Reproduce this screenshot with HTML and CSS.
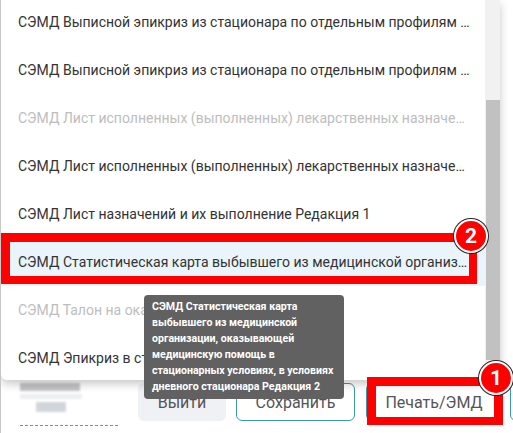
FILE: index.html
```html
<!DOCTYPE html>
<html lang="ru">

<head>
    <meta charset="UTF-8">
    <link rel="stylesheet" href="styles.css">
</head>

<body>
    <div class="page">
        <div class="page-main">
            <div class="page-content"></div>

            <div class="footer">
                <div class="footer-info">
                    <div class="blur blur-wide"></div>
                    <div class="blur blur-light"></div>
                    <div class="blur blur-short"></div>
                    <div class="dash-line"></div>
                </div>
                <button class="btn btn-gray">Выйти</button>
                <button class="btn btn-outline">Сохранить</button>
                <button class="btn btn-outline btn-print">Печать/ЭМД</button>
                <button class="btn btn-outline btn-next"></button>
            </div>
        </div>

        <div class="side-strip">
            <div class="side-num">99</div>
            <div class="blur side-dark"></div>
            <div class="blur side-green"></div>
            <div class="blur side-light"></div>
            <div class="blur side-light"></div>
            <div class="blur side-mid"></div>
            <div class="blur side-light"></div>
            <div class="blur side-mid"></div>
            <div class="blur side-light"></div>
            <div class="blur side-light"></div>
        </div>

        <!-- dropdown of the Печать/ЭМД button -->
        <div class="menu">
            <ul class="menu-list">
                <li class="menu-item">СЭМД Выписной эпикриз из стационара по отдельным профилям медицинской помощи Редакция 1</li>
                <li class="menu-item">СЭМД Выписной эпикриз из стационара по отдельным профилям медицинской помощи Редакция 2</li>
                <li class="menu-item disabled">СЭМД Лист исполненных (выполненных) лекарственных назначений Редакция 1</li>
                <li class="menu-item">СЭМД Лист исполненных (выполненных) лекарственных назначений Редакция 2</li>
                <li class="menu-item">СЭМД Лист назначений и их выполнение Редакция 1</li>
                <li class="menu-item active">СЭМД Статистическая карта выбывшего из медицинской организации, оказывающей медицинскую помощь в стационарных условиях, в условиях дневного стационара Редакция 2</li>
                <li class="menu-item disabled">СЭМД Талон на оказание медпомощи Редакция</li>
                <li class="menu-item">СЭМД Эпикриз в стационаре выписной</li>
            </ul>
            <div class="scrollbar">
                <div class="scroll-thumb"></div>
            </div>
        </div>

        <div class="tooltip">СЭМД Статистическая карта выбывшего из медицинской организации, оказывающей медицинскую помощь в стационарных условиях, в условиях дневного стационара Редакция 2</div>

        <div class="mark mark-item"></div>
        <div class="badge badge-item">2</div>

        <div class="mark mark-button"></div>
        <div class="badge badge-button">1</div>
    </div>
</body>

</html>
```

FILE: styles.css
```css
* {
    box-sizing: border-box;
}

body {
    margin: 0;
    font-family: Roboto, "Liberation Sans", Arial, sans-serif;
    background-color: #fff;
}

.page {
    position: relative;
    width: 513px;
    height: 433px;
    overflow: hidden;
    display: flex;
    border-left: 1px solid #c8c8c8;
}

.page-main {
    flex: 1;
    display: flex;
    flex-direction: column;
}

.page-content {
    flex: 1;
}

/* footer with buttons */
.footer {
    display: flex;
    align-items: center;
    height: 38px;
    margin-bottom: 12px;
}

.footer-info {
    width: 137px;
    padding-left: 19px;
    align-self: stretch;
    display: flex;
    flex-direction: column;
    gap: 3px;
    position: relative;
}

.blur {
    background-color: #c4c4c6;
    filter: blur(1px);
}

.blur-wide {
    width: 60px;
    height: 8px;
}

.blur-light {
    width: 62px;
    height: 5px;
    background-color: #eceef0;
}

.blur-short {
    width: 30px;
    height: 10px;
    margin-left: 16px;
    background-color: #d2d6dc;
}

.dash-line {
    margin-top: auto;
    margin-bottom: -5px;
    width: 98px;
    border-top: 1px dashed #888;
}

.btn {
    height: 38px;
    border-radius: 6px;
    font-family: inherit;
    font-size: 16px;
    color: #555;
    background-color: #fff;
    padding: 0;
    margin-right: 10px;
}

.btn-gray {
    width: 88px;
    border: none;
    background-color: #f0f1f4;
}

.btn-outline {
    width: 119px;
    border: 1px solid #3a9aa8;
}

.btn-print {
    width: 136px;
    margin-left: 1px;
    margin-right: 8px;
}

.btn-next {
    width: 20px;
    margin-right: 0;
    flex-shrink: 0;
}

/* right strip of the page behind the menu */
.side-strip {
    width: 13px;
    padding-top: 3px;
    display: flex;
    flex-direction: column;
    gap: 5px;
    border-left: 1px solid #e6e6e6;
    background-color: #fbfbfb;
    overflow: hidden;
}

.side-num {
    border-top: 1px solid #999;
    font-size: 11px;
    color: #aaa;
    line-height: 14px;
    padding-top: 2px;
}

.side-dark {
    height: 6px;
    background-color: #a5a5a8;
}

.side-green {
    height: 18px;
    background-color: #b9c7c2;
}

.side-light {
    height: 12px;
    background-color: #e8e8e8;
}

.side-mid {
    height: 8px;
    background-color: #cfcfcf;
}

/* dropdown */
.menu {
    position: absolute;
    top: 0;
    left: 0;
    width: 499px;
    height: 380px;
    display: flex;
    background-color: #fff;
    border-radius: 0 0 6px 6px;
    box-shadow: 0 4px 10px rgba(0, 0, 0, 0.22);
    overflow: hidden;
}

.menu-list {
    flex: 1;
    min-width: 0;
    list-style: none;
    margin: -2px 0 0;
    padding: 0;
}

.menu-item {
    height: 48px;
    line-height: 48px;
    padding: 0 15px 0 17px;
    font-size: 14px;
    color: #333;
    white-space: nowrap;
    overflow: hidden;
    text-overflow: ellipsis;
}

.menu-item.disabled {
    color: #bdbdbd;
}

.menu-item.active {
    background-color: #e9f5fb;
}

.scrollbar {
    width: 15px;
    background-color: #f1f1f1;
    padding: 100px 0 20px 1px;
}

.scroll-thumb {
    height: 100%;
    background-color: #c1c1c1;
}

/* tooltip */
.tooltip {
    position: absolute;
    left: 143px;
    top: 295px;
    width: 200px;
    padding: 4px 8px;
    background-color: #616161;
    border-radius: 4px;
    color: #fff;
    font-size: 10.6px;
    font-weight: 700;
    line-height: 16px;
}

/* red annotation marks */
.mark {
    position: absolute;
    border: 9px solid #f00;
    border-bottom-width: 8px;
}

.mark-item {
    left: 0;
    top: 233px;
    width: 476px;
    height: 51px;
    border-right-width: 8px;
}

.mark-button {
    left: 366px;
    top: 377px;
    width: 136px;
    height: 48px;
}

.badge {
    position: absolute;
    width: 34px;
    height: 34px;
    border-radius: 50%;
    background-color: #f00;
    border: 2px solid #fff;
    box-shadow: 0 0 0 1px #222;
    color: #fff;
    font-size: 21px;
    font-weight: 700;
    line-height: 30px;
    text-align: center;
}

.badge-item {
    left: 453px;
    top: 219px;
}

.badge-button {
    left: 478px;
    top: 361px;
}
```
